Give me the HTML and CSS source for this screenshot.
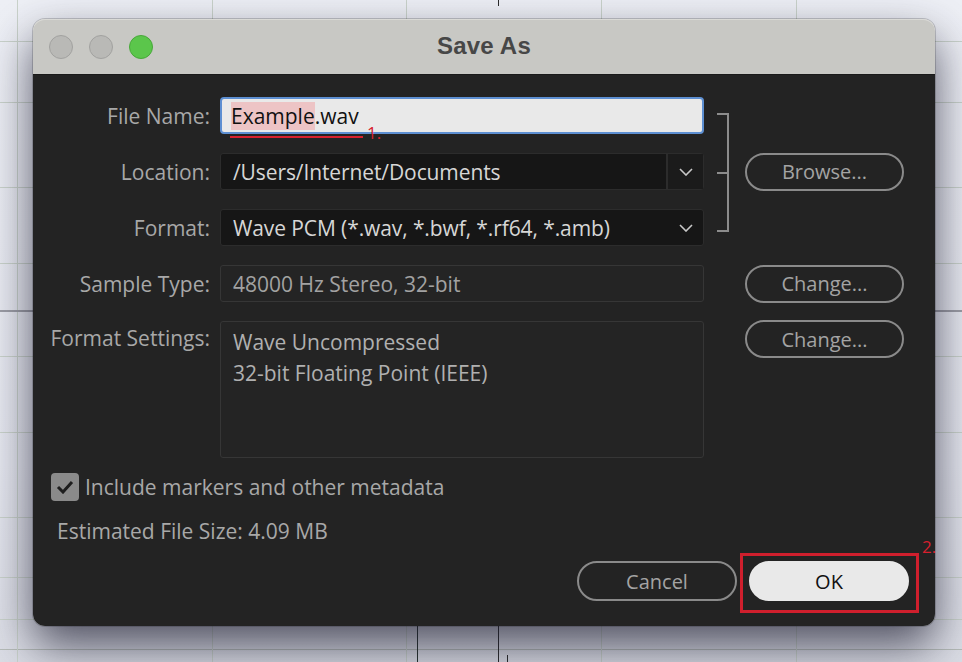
FILE: index.html
```html
<!DOCTYPE html>
<html lang="en">
<head>
<meta charset="utf-8">
<title>Save As</title>
<link rel="stylesheet" href="styles.css">
</head>
<body>
<div class="page">
  <div class="dialog">
    <div class="titlebar">
      <div class="lights">
        <span class="light grey"></span>
        <span class="light grey"></span>
        <span class="light green"></span>
      </div>
      <div class="title">Save As</div>
      <div class="spacer"></div>
    </div>
    <div class="content">
      <div class="form">
        <label class="lbl">File Name:</label>
        <div class="field name"><span class="sel">Example</span>.wav</div>
        <div class="bracket"><i></i></div>

        <label class="lbl">Location:</label>
        <div class="field dark loc">
          <span class="val">/Users/Internet/Documents</span>
          <span class="drop"><svg width="14" height="8" viewBox="0 0 14 8"><polyline points="1,1 7,7 13,1" fill="none" stroke="#c8c8c8" stroke-width="1.6"/></svg></span>
        </div>
        <button class="btn side">Browse...</button>

        <label class="lbl">Format:</label>
        <div class="field dark fmt">
          <span class="val">Wave PCM (*.wav, *.bwf, *.rf64, *.amb)</span>
          <span class="drop plain"><svg width="14" height="8" viewBox="0 0 14 8"><polyline points="1,1 7,7 13,1" fill="none" stroke="#c8c8c8" stroke-width="1.6"/></svg></span>
        </div>

        <label class="lbl">Sample Type:</label>
        <div class="field ghost">48000 Hz Stereo, 32-bit</div>
        <button class="btn side">Change...</button>

        <label class="lbl top">Format Settings:</label>
        <div class="field ghost area">Wave Uncompressed<br>32-bit Floating Point (IEEE)</div>
        <button class="btn side topbtn">Change...</button>
      </div>

      <div class="check">
        <span class="box"><svg width="18" height="14" viewBox="0 0 18 14"><polyline points="2,7 7,12 16,2" fill="none" stroke="#1e1e1e" stroke-width="3"/></svg></span>
        <span class="check-text">Include markers and other metadata</span>
      </div>
      <div class="est">Estimated File Size: 4.09 MB</div>

      <div class="actions">
        <button class="btn cancel">Cancel</button>
        <button class="btn ok">OK</button>
      </div>
    </div>

    <div class="mark-line"></div>
    <div class="mark-num one">1.</div>
    <div class="mark-box"></div>
    <div class="mark-num two">2.</div>
  </div>
</div>
</body>
</html>
```
FILE: styles.css
```css
html, body {
  margin: 0;
  padding: 0;
}

body {
  width: 962px;
  height: 662px;
  overflow: hidden;
  font-family: "Open Sans", "Noto Sans", sans-serif;
}

.page {
  width: 962px;
  height: 662px;
  display: flex;
  align-items: flex-start;
  background:
    linear-gradient(#27322e, #27322e) 417px 626px / 1px 36px no-repeat,
    linear-gradient(#2b2b2b, #2b2b2b) 498px 0 / 1px 6px no-repeat,
    linear-gradient(#2b2b2b, #2b2b2b) 498px 626px / 1px 36px no-repeat,
    linear-gradient(#2b2b2b, #2b2b2b) 507px 655px / 1px 7px no-repeat,
    linear-gradient(#9d9ea6, #9d9ea6) 0 310px / 100% 2px no-repeat,
    linear-gradient(#cad3cb, #cad3cb) 17px 0 / 1px 100% no-repeat,
    linear-gradient(#cad3cb, #cad3cb) 212px 0 / 1px 100% no-repeat,
    linear-gradient(#cad3cb, #cad3cb) 406px 0 / 1px 100% no-repeat,
    linear-gradient(#cad3cb, #cad3cb) 601px 0 / 1px 100% no-repeat,
    linear-gradient(#cad3cb, #cad3cb) 796px 0 / 1px 100% no-repeat,
    linear-gradient(#cad3cb, #cad3cb) 0 41px / 100% 1px no-repeat,
    linear-gradient(#cad3cb, #cad3cb) 0 102px / 100% 1px no-repeat,
    linear-gradient(#cad3cb, #cad3cb) 0 187px / 100% 1px no-repeat,
    linear-gradient(#cad3cb, #cad3cb) 0 263px / 100% 1px no-repeat,
    linear-gradient(#cad3cb, #cad3cb) 0 356px / 100% 1px no-repeat,
    linear-gradient(#cad3cb, #cad3cb) 0 432px / 100% 1px no-repeat,
    linear-gradient(#cad3cb, #cad3cb) 0 517px / 100% 1px no-repeat,
    linear-gradient(#cad3cb, #cad3cb) 0 577px / 100% 1px no-repeat,
    linear-gradient(#cad3cb, #cad3cb) 0 619px / 100% 1px no-repeat,
    linear-gradient(#b6bcb8, #b6bcb8) 0 649px / 100% 1px no-repeat,
    linear-gradient(to bottom, #eef0f6 0%, #e6e8f0 70%, #dcdee6 100%);
}

.dialog {
  position: relative;
  margin: 19px 0 0 33px;
  width: 902px;
  height: 607px;
  border-radius: 12px;
  display: flex;
  flex-direction: column;
  box-shadow: 0 20px 46px rgba(25, 25, 45, 0.72), 0 0 0 1px rgba(0, 0, 0, 0.18);
}

.titlebar {
  height: 56px;
  flex: none;
  background: #c8c8c4;
  border-radius: 12px 12px 0 0;
  box-shadow: inset 0 1px 0 #dadad6, inset 0 -1px 0 #1a1a1a;
  display: grid;
  grid-template-columns: 1fr auto 1fr;
  align-items: center;
}

.lights {
  display: flex;
  gap: 16px;
  padding-left: 16px;
}

.light {
  width: 24px;
  height: 24px;
  border-radius: 50%;
  box-sizing: border-box;
}

.light.grey {
  background: #b9b9b6;
  border: 1px solid #a2a2a0;
}

.light.green {
  background: #5bc64b;
  border: 1px solid #48a83a;
}

.title {
  font-family: "Liberation Sans", Arial, sans-serif;
  font-weight: bold;
  font-size: 24px;
  color: #474747;
  letter-spacing: 0.2px;
  margin-top: -2px;
}

.content {
  flex: 1;
  background: #232323;
  border-radius: 0 0 12px 12px;
  padding: 22px 26px 23px 0;
  display: flex;
  flex-direction: column;
}

.form {
  display: grid;
  grid-template-columns: 187px 484px 41px 159px;
  grid-template-rows: 37px 37px 37px 37px 137px;
  column-gap: 0;
  row-gap: 19px;
}

.lbl {
  grid-column: 1;
  justify-self: end;
  align-self: center;
  padding-right: 10px;
  font-size: 21px;
  color: #a8a8a8;
  white-space: nowrap;
  line-height: 28px;
}

.lbl.top {
  align-self: start;
  margin-top: 3px;
}

.field {
  grid-column: 2;
  box-sizing: border-box;
  border-radius: 3px;
  font-size: 21px;
  line-height: 28px;
  white-space: nowrap;
  display: flex;
  align-items: center;
  padding-left: 12px;
}

.field.name {
  background: #e9e9e9;
  border: 2px solid #5d8fd2;
  border-radius: 4px;
  color: #111;
  padding-left: 9px;
}

.sel {
  background: #edc4c5;
}

.field.dark {
  background: #161616;
  border: 1px solid #2c2c2c;
  color: #d6d6d6;
  padding-right: 0;
}

.field.dark .val {
  flex: 1;
  letter-spacing: -0.1px;
}

.drop {
  width: 35px;
  align-self: stretch;
  display: flex;
  align-items: center;
  justify-content: center;
  background: #1b1b1b;
  border-left: 2px solid #2c2c2c;
}

.drop.plain {
  background: transparent;
  border-left: none;
}

.field.ghost {
  background: #242424;
  border: 1px solid #363636;
  color: #a2a2a2;
}

.field.area {
  align-items: flex-start;
  white-space: normal;
  line-height: 31px;
  padding-top: 5px;
  color: #b0b0b0;
}

.bracket {
  grid-column: 3;
  grid-row: 1 / 4;
  margin: 16px 0 14px 13px;
  width: 10px;
  border: 2px solid #8c8c8c;
  border-left: none;
  display: flex;
  align-items: center;
}

.bracket i {
  display: block;
  width: 10px;
  height: 2px;
  background: #8c8c8c;
}

.btn {
  font-family: "Open Sans", "Noto Sans", sans-serif;
  font-size: 20px;
  background: transparent;
  color: #a4a4a4;
  border: 2px solid #8a8a8a;
  border-radius: 20px;
  box-sizing: border-box;
  padding: 0;
  cursor: default;
}

.btn.side {
  grid-column: 4;
  height: 38px;
  align-self: center;
}

.btn.topbtn {
  align-self: start;
  margin-top: -1px;
}

.check {
  margin: 15px 0 0 18px;
  display: flex;
  align-items: center;
  gap: 6px;
  height: 28px;
}

.box {
  width: 28px;
  height: 28px;
  border-radius: 4px;
  background: #8a8a8a;
  display: flex;
  align-items: center;
  justify-content: center;
}

.check-text {
  font-size: 21px;
  color: #a8a8a8;
}

.est {
  margin: 16px 0 0 24px;
  height: 28px;
  line-height: 28px;
  font-size: 21px;
  color: #a8a8a8;
}

.actions {
  margin-top: 16px;
  display: flex;
  justify-content: flex-end;
  gap: 12px;
}

.actions .btn {
  width: 160px;
  height: 40px;
}

.btn.ok {
  background: #e9e9e9;
  border-color: #e9e9e9;
  color: #111;
}

.mark-line {
  position: absolute;
  left: 197px;
  top: 117px;
  width: 133px;
  height: 2px;
  background: #d8202e;
}

.mark-num {
  position: absolute;
  font-family: "Open Sans", sans-serif;
  font-size: 17px;
  line-height: 20px;
  color: #d8202e;
}

.mark-num.one {
  left: 334px;
  top: 104px;
}

.mark-num.two {
  left: 889px;
  top: 518px;
}

.mark-box {
  position: absolute;
  left: 707px;
  top: 534px;
  width: 179px;
  height: 60px;
  box-sizing: border-box;
  border: 3px solid #cf1f2d;
}
```
